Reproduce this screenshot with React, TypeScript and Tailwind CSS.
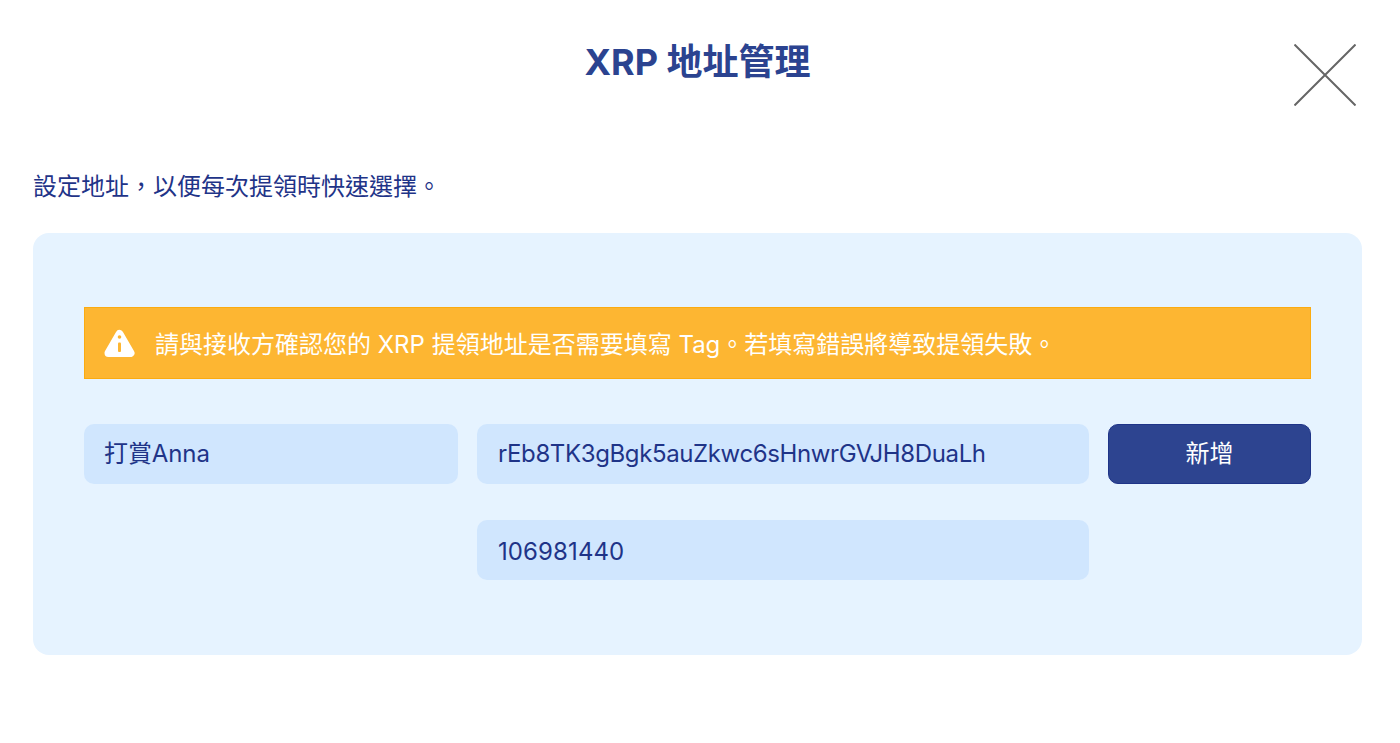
const FONT = "font-['Inter','Noto_Sans_CJK_TC',sans-serif]";

function CloseIcon() {
  return (
    <svg width="62" height="62" viewBox="0 0 62 62" fill="none" stroke="#666666" strokeWidth="2">
      <path d="M0.5 0.5L61.5 61.5M61.5 0.5L0.5 61.5" />
    </svg>
  );
}

function WarningIcon() {
  return (
    <svg width="31" height="29" viewBox="0 0 31 29">
      <path d="M15.5 5L26.500 24H4.500z" fill="#ffffff" stroke="#ffffff" strokeWidth="8" strokeLinejoin="round" />
      <circle cx="15.500" cy="8" r="1.800" fill="#fdb632" />
      <rect x="14" y="13.500" width="3" height="9.500" rx="1" fill="#fdb632" />
    </svg>
  );
}

function Field({ value, className }: { value: string; className?: string }) {
  return (
    <div
      className={`flex h-[60px] items-center rounded-[10px] bg-[#d0e6fe] text-2xl text-[#1f3488] ${className ?? ""}`}
    >
      {value}
    </div>
  );
}

export default function App() {
  return (
    <div className={`h-[743px] w-[1400px] overflow-hidden bg-white pl-[33px] pr-[38px] ${FONT}`}>
      <header className="relative flex h-[124px] justify-center pt-[39px]">
        <h1 className="text-[36px] leading-[46px] font-bold text-[#2b4390]">XRP 地址管理</h1>
        <button type="button" className="absolute top-[44px] right-[6px]">
          <CloseIcon />
        </button>
      </header>

      <p className="mt-[46px] text-2xl leading-[34px] text-[#1f3488]">設定地址，以便每次提領時快速選擇。</p>

      <section className="mt-[29px] h-[422px] rounded-[16px] bg-[#e6f3ff] px-[51px] pt-[74px]">
        <div className="flex h-[72px] items-center gap-[20px] border border-[#fbab11] bg-[#fdb632] pl-[19px] text-2xl text-white">
          <WarningIcon />
          <span className="pt-[3px]">請與接收方確認您的 XRP 提領地址是否需要填寫 Tag。若填寫錯誤將導致提領失敗。</span>
        </div>

        <div className="mt-[45px] grid grid-cols-[374px_612px_203px] gap-x-[19px] gap-y-[36px]">
          <Field value="打賞Anna" className="px-5 tracking-[-0.1px]" />
          <Field value="rEb8TK3gBgk5auZkwc6sHnwrGVJH8DuaLh" className="px-[21px] tracking-[-0.38px]" />
          <button
            type="button"
            className="h-[60px] rounded-[10px] border border-[#1f3488] bg-[#2d4490] text-2xl text-white"
          >
            新增
          </button>
          <Field value="106981440" className="col-start-2 px-[21px] pt-[4px] tracking-[0.1px]" />
        </div>
      </section>
    </div>
  );
}
